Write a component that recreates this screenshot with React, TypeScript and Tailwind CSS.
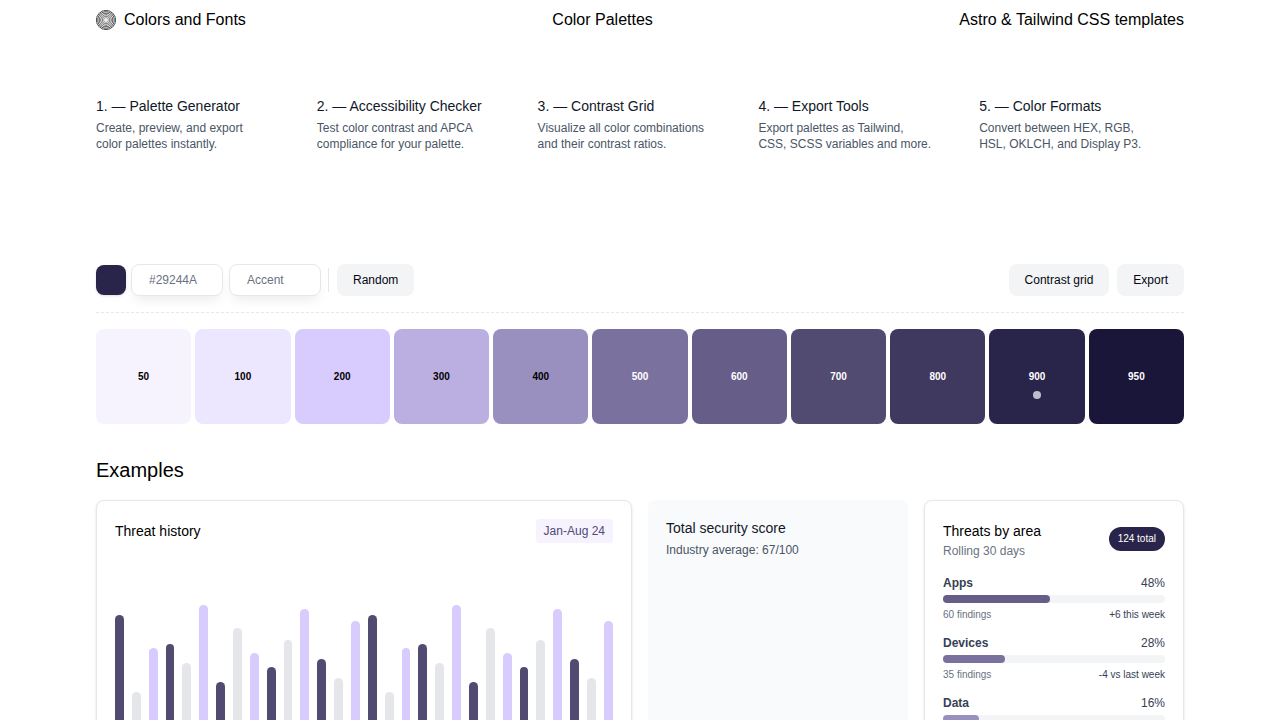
const features = [
  { title: "Palette Generator", lines: ["Create, preview, and export", "color palettes instantly."] },
  { title: "Accessibility Checker", lines: ["Test color contrast and APCA", "compliance for your palette."] },
  { title: "Contrast Grid", lines: ["Visualize all color combinations", "and their contrast ratios."] },
  { title: "Export Tools", lines: ["Export palettes as Tailwind,", "CSS, SCSS variables and more."] },
  { title: "Color Formats", lines: ["Convert between HEX, RGB,", "HSL, OKLCH, and Display P3."] },
];

const swatches = [
  { step: 50, style: "bg-[#f6f3ff] text-black" },
  { step: 100, style: "bg-[#ece7fe] text-black" },
  { step: 200, style: "bg-[#d7ccfd] text-black" },
  { step: 300, style: "bg-[#bbafe1] text-black" },
  { step: 400, style: "bg-[#9a90c0] text-black" },
  { step: 500, style: "bg-[#7b719f] text-white" },
  { step: 600, style: "bg-[#665d88] text-white" },
  { step: 700, style: "bg-[#514a71] text-white" },
  { step: 800, style: "bg-[#3f385f] text-white" },
  { step: 900, style: "bg-[#29244a] text-white" },
  { step: 950, style: "bg-[#1a163a] text-white" },
];

const half = [156, 79, 123, 127, 108, 166, 89, 143, 118, 104, 131, 162, 112, 93, 150];
const history = [...half, ...half];
const barColors = ["bg-[#514a71]", "bg-[#e5e6e9]", "bg-[#d7ccfd]"];

type Area = { name: string; share: number; color: string; findings?: string; trend?: string };

const areas: Area[] = [
  { name: "Apps", share: 48, color: "bg-[#665d88]", findings: "60 findings", trend: "+6 this week" },
  { name: "Devices", share: 28, color: "bg-[#7b719f]", findings: "35 findings", trend: "-4 vs last week" },
  { name: "Data", share: 16, color: "bg-[#9a90c0]" },
];

function Logo() {
  const rings = [0.8, 2.3, 3.8, 5.3, 6.8, 8.3, 9.6];
  return (
    <svg viewBox="0 0 20 20" className="size-5" fill="none" stroke="#000" aria-hidden="true">
      {rings.map((r) => (
        <circle key={r} cx="10" cy="10" r={r} strokeWidth="0.8" />
      ))}
      <g stroke="#fff" strokeWidth="0.35">
        {[0, 15, 30, 45, 60, 75, 90, 105, 120, 135, 150, 165].map((angle) => (
          <path key={angle} d="M0 10h20" transform={`rotate(${angle} 10 10)`} />
        ))}
      </g>
    </svg>
  );
}

function Header() {
  return (
    <header className="flex items-center justify-between py-2 text-base text-black">
      <a href="#home" className="flex items-center gap-2">
        <Logo />
        Colors and Fonts
      </a>
      <a href="#palettes">Color Palettes</a>
      <a href="#templates">Astro &amp; Tailwind CSS templates</a>
    </header>
  );
}

function Features() {
  return (
    <section className="mt-14 grid grid-cols-5 gap-4">
      {features.map((f, i) => (
        <div key={f.title}>
          <h2 className="text-sm text-gray-900">
            {i + 1}. — {f.title}
          </h2>
          <p className="mt-1 text-xs whitespace-nowrap text-gray-600">
            {f.lines[0]}
            <br />
            {f.lines[1]}
          </p>
        </div>
      ))}
    </section>
  );
}

const fieldStyle =
  "h-8 w-[92px] rounded-lg border border-gray-200 bg-white px-[17px] text-xs text-gray-500 placeholder:text-gray-500 shadow-[0_8px_12px_-4px_rgb(0_0_0/0.08)] outline-none";
const buttonStyle = "h-8 rounded-lg bg-gray-100 px-4 text-xs text-gray-950";

function Toolbar() {
  return (
    <div className="mt-28 flex items-center justify-between border-b border-dashed border-gray-200 pb-4">
      <div className="flex items-center gap-[7px]">
        <div className="flex items-center gap-1.5">
          <div className="flex items-center gap-[5px]">
            <button type="button" aria-label="Pick color" className="size-[30px] rounded-lg bg-[#29244a] shadow-sm" />
            <input aria-label="Hex color" defaultValue="#29244A" className={fieldStyle} />
          </div>
          <input aria-label="Palette name" placeholder="Accent" className={fieldStyle} />
        </div>
        <div className="flex items-center gap-2">
          <span className="h-6 w-px bg-gray-200" />
          <button type="button" className={buttonStyle}>Random</button>
        </div>
      </div>
      <div className="flex gap-2">
        <button type="button" className={buttonStyle}>Contrast grid</button>
        <button type="button" className={buttonStyle}>Export</button>
      </div>
    </div>
  );
}

function Palette() {
  return (
    <div className="mt-4 grid grid-cols-11 gap-1">
      {swatches.map((s) => (
        <button
          key={s.step}
          type="button"
          className={`relative flex aspect-square items-center justify-center rounded-lg text-[10px] font-bold ${s.style}`}
        >
          {s.step}
          {s.step === 900 && (
            <span className="absolute top-[62px] left-1/2 size-2 -translate-x-1/2 rounded-full bg-white/70" />
          )}
        </button>
      ))}
    </div>
  );
}

const outlined = "rounded-lg border border-gray-200 bg-white p-[18px] shadow-sm";

function ThreatHistory() {
  return (
    <section className={`col-span-2 ${outlined}`}>
      <div className="flex items-center justify-between">
        <h3 className="text-sm text-black">Threat history</h3>
        <span className="rounded-sm bg-[#f6f3ff] px-2 py-1 text-xs text-[#514a71]">Jan-Aug 24</span>
      </div>
      <div className="mt-9 flex h-48 items-end gap-2">
        {history.map((height, i) => (
          <div key={i} className={`flex-1 rounded-full ${barColors[i % 3]}`} style={{ height }} />
        ))}
      </div>
    </section>
  );
}

function SecurityScore() {
  return (
    <section className="rounded-lg bg-gray-50 p-[18px]">
      <h3 className="text-sm text-gray-900">Total security score</h3>
      <p className="mt-1 text-xs text-gray-600">Industry average: 67/100</p>
    </section>
  );
}

function ThreatsByArea() {
  return (
    <section className={outlined}>
      <div className="flex items-center justify-between">
        <div>
          <h3 className="text-sm leading-6 text-black">Threats by area</h3>
          <p className="text-xs text-gray-500">Rolling 30 days</p>
        </div>
        <span className="rounded-full bg-[#29244a] px-[9px] text-[10px] leading-6 font-medium text-white">124 total</span>
      </div>
      <div className="mt-4 flex flex-col gap-3">
        {areas.map((a) => (
          <div key={a.name} className="flex flex-col gap-1">
            <div className="flex justify-between text-xs text-gray-700">
              <span className="font-semibold">{a.name}</span>
              <span>{a.share}%</span>
            </div>
            <div className="h-2 rounded-full bg-gray-100">
              <div className={`h-2 rounded-full ${a.color}`} style={{ width: `${a.share}%` }} />
            </div>
            {a.findings && (
              <div className="flex justify-between text-[10px] leading-4">
                <span className="text-gray-500">{a.findings}</span>
                <span className="text-gray-700">{a.trend}</span>
              </div>
            )}
          </div>
        ))}
      </div>
    </section>
  );
}

export default function App() {
  return (
    <div className="min-h-screen bg-white font-['Liberation_Sans',Arial,sans-serif]">
      <div className="mx-auto max-w-[1136px] px-6">
        <Header />
        <main>
          <Features />
          <Toolbar />
          <Palette />
          <h2 className="mt-8 text-xl text-black">Examples</h2>
          <div className="mt-4 grid grid-cols-4 gap-4">
            <ThreatHistory />
            <SecurityScore />
            <ThreatsByArea />
          </div>
        </main>
      </div>
    </div>
  );
}
